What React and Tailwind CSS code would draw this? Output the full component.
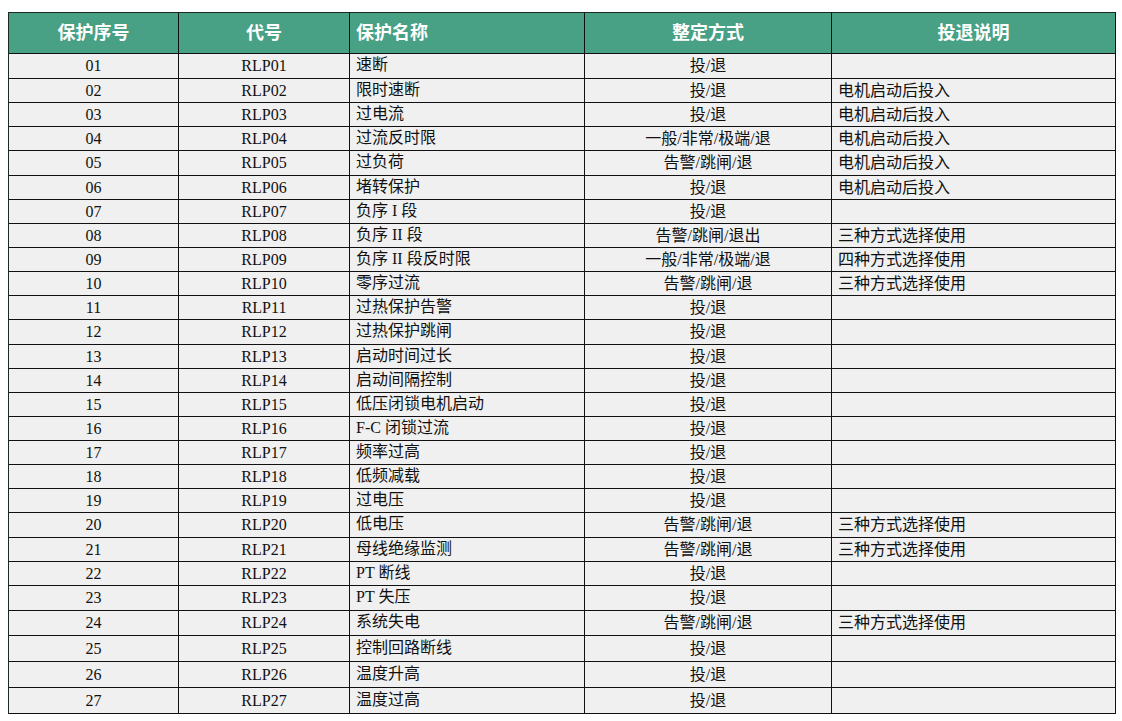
import React from "react";

const rows = [
  ["01", "速断", "投/退", "", "h-[25px]"],
  ["02", "限时速断", "投/退", "电机启动后投入", "h-[24px]"],
  ["03", "过电流", "投/退", "电机启动后投入", "h-[24px]"],
  ["04", "过流反时限", "一般/非常/极端/退", "电机启动后投入", "h-[24px]"],
  ["05", "过负荷", "告警/跳闸/退", "电机启动后投入", "h-[25px]"],
  ["06", "堵转保护", "投/退", "电机启动后投入", "h-[24px]"],
  ["07", "负序 I 段", "投/退", "", "h-[24px]"],
  ["08", "负序 II 段", "告警/跳闸/退出", "三种方式选择使用", "h-[24px]"],
  ["09", "负序 II 段反时限", "一般/非常/极端/退", "四种方式选择使用", "h-[24px]"],
  ["10", "零序过流", "告警/跳闸/退", "三种方式选择使用", "h-[24px]"],
  ["11", "过热保护告警", "投/退", "", "h-[24px]"],
  ["12", "过热保护跳闸", "投/退", "", "h-[25px]"],
  ["13", "启动时间过长", "投/退", "", "h-[24px]"],
  ["14", "启动间隔控制", "投/退", "", "h-[24px]"],
  ["15", "低压闭锁电机启动", "投/退", "", "h-[24px]"],
  ["16", "F-C 闭锁过流", "投/退", "", "h-[24px]"],
  ["17", "频率过高", "投/退", "", "h-[24px]"],
  ["18", "低频减载", "投/退", "", "h-[24px]"],
  ["19", "过电压", "投/退", "", "h-[24px]"],
  ["20", "低电压", "告警/跳闸/退", "三种方式选择使用", "h-[25px]"],
  ["21", "母线绝缘监测", "告警/跳闸/退", "三种方式选择使用", "h-[24px]"],
  ["22", "PT 断线", "投/退", "", "h-[24px]"],
  ["23", "PT 失压", "投/退", "", "h-[25px]"],
  ["24", "系统失电", "告警/跳闸/退", "三种方式选择使用", "h-[25px]"],
  ["25", "控制回路断线", "投/退", "", "h-[26px]"],
  ["26", "温度升高", "投/退", "", "h-[26px]"],
  ["27", "温度过高", "投/退", "", "h-[26px]"],
];

const cols = "grid grid-cols-[170px_171px_235px_247px_284px]";
const cell = "flex items-center border-r border-b border-[#111]";

export default function App() {
  return (
    <div className="min-h-screen bg-white pl-[8px] pt-[12px] font-['Liberation_Serif','Noto_Sans_CJK_SC',serif]">
      <div className="w-[1108px] border-l border-t border-[#1d2a24]">
        {/* header */}
        <div className={`${cols} h-[41px] bg-[#48a085] text-[18px] font-bold text-white`}>
          <div className={`${cell} justify-center border-[#1d2a24]`}>保护序号</div>
          <div className={`${cell} justify-center border-[#1d2a24]`}>代号</div>
          <div className={`${cell} border-[#1d2a24] pl-[6px]`}>保护名称</div>
          <div className={`${cell} justify-center border-[#1d2a24]`}>整定方式</div>
          <div className={`${cell} justify-center border-[#1d2a24]`}>投退说明</div>
        </div>
        {rows.map(([no, name, mode, note, h]) => (
          <div key={no} className={`${cols} ${h} bg-[#f0f0f0] text-[16px] leading-none text-[#111]`}>
            <div className={`${cell} justify-center`}>{no}</div>
            <div className={`${cell} justify-center`}>RLP{no}</div>
            <div className={`${cell} pl-[6px] pb-[2px]`}>{name}</div>
            <div className={`${cell} justify-center`}>{mode}</div>
            <div className={`${cell} pl-[6px]`}>{note}</div>
          </div>
        ))}
      </div>
    </div>
  );
}
